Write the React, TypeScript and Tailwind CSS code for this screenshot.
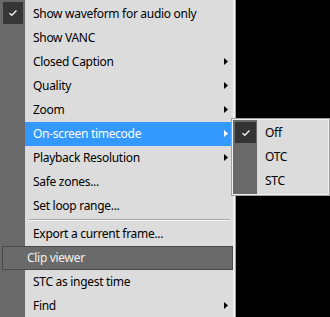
const items: { label: string; arrow?: boolean; checked?: boolean; active?: boolean }[] = [
  { label: "Show waveform for audio only", checked: true },
  { label: "Show VANC" },
  { label: "Closed Caption", arrow: true },
  { label: "Quality", arrow: true },
  { label: "Zoom", arrow: true },
  { label: "On-screen timecode", arrow: true, active: true },
  { label: "Playback Resolution", arrow: true },
  { label: "Safe zones..." },
  { label: "Set loop range..." },
];

const lower: { label: string; arrow?: boolean; selected?: boolean }[] = [
  { label: "Export a current frame..." },
  { label: "Clip viewer", selected: true },
  { label: "STC as ingest time" },
  { label: "Find", arrow: true },
];

function Check() {
  return (
    <svg width="10" height="8" viewBox="0 0 10 8" fill="none">
      <path d="M1.5 4.2 L3.8 6.3 L8.5 1.5" stroke="#f4f4f4" strokeWidth="1.3" />
    </svg>
  );
}

function Arrow({ white }: { white?: boolean }) {
  return (
    <svg
      width="4"
      height="7"
      viewBox="0 0 4 7"
      className="absolute right-[5px] top-[8px]"
    >
      <path d="M0 0 L4 3.5 L0 7 Z" fill={white ? "#ffffff" : "#000000"} />
    </svg>
  );
}

export default function App() {
  return (
    <div
      className="relative h-[317px] w-[330px] overflow-hidden bg-black text-[12px] tracking-[-0.3px] text-black"
      style={{ fontFamily: '"Noto Sans", "Open Sans", sans-serif' }}
    >
      <div className="h-full w-[236px] border-r border-[#a0a0a0]">
        <div className="h-full border-r-2 border-[#f0f0f0] bg-[linear-gradient(to_right,#696969_25px,#dcdcdc_25px)] pt-[2px]">
          {items.map((it) => (
            <div
              key={it.label}
              className={`relative ml-[25px] flex h-6 items-center pl-2 ${
                it.active ? "bg-[#3399ff] text-white" : ""
              }`}
            >
              {it.checked && (
                <span className="absolute left-[-22px] top-0 flex h-[22px] w-5 items-center justify-center bg-[#363636]">
                  <Check />
                </span>
              )}
              <span>{it.label}</span>
              {it.arrow && <Arrow white={it.active} />}
            </div>
          ))}
          <div className="ml-[29px] mr-[3px] h-1 pt-px">
            <div className="border-t border-b border-t-[#a8a8a8] border-b-[#f6f6f6]" />
          </div>
          {lower.map((it) =>
            it.selected ? (
              <div
                key={it.label}
                className="ml-[2px] flex h-6 w-[231px] items-center border border-[#4a4a4a] bg-[#6a6a6a] pl-6 text-[#f2f2f2]"
              >
                {it.label}
              </div>
            ) : (
              <div
                key={it.label}
                className="relative ml-[25px] flex h-6 items-center pl-2"
              >
                <span>{it.label}</span>
                {it.arrow && <Arrow />}
              </div>
            )
          )}
        </div>
      </div>

      <div className="absolute left-[231px] top-[118px] w-[99px] border border-[#a0a0a0]">
        <div className="border border-[#f0f0f0] bg-[linear-gradient(to_right,#696969_24px,#dcdcdc_24px)] py-px pl-px">
          {["Off", "OTC", "STC"].map((l, i) => (
            <div key={l} className="relative flex h-6 items-center pl-[31px]">
              {i === 0 && (
                <span className="absolute left-px top-px flex h-[21px] w-[21px] items-center justify-center bg-[#333333]">
                  <Check />
                </span>
              )}
              {l}
            </div>
          ))}
        </div>
      </div>
    </div>
  );
}
